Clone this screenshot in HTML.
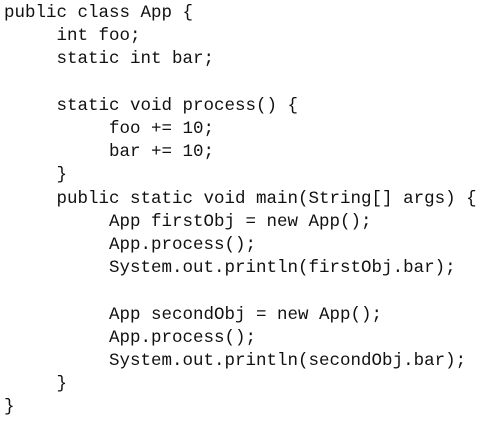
<!DOCTYPE html>
<html><head><style>
html,body{margin:0;padding:0;background:#fff;width:486px;height:424px;overflow:hidden}
pre{margin:0;position:absolute;left:4px;top:2px;font-family:"Liberation Mono",monospace;font-size:17.5px;line-height:23.2px;color:#111}
</style></head><body>
<pre>public class App {
     int foo;
     static int bar;

     static void process() {
          foo += 10;
          bar += 10;
     }
     public static void main(String[] args) {
          App firstObj = new App();
          App.process();
          System.out.println(firstObj.bar);

          App secondObj = new App();
          App.process();
          System.out.println(secondObj.bar);
     }
}</pre>
</body></html>
